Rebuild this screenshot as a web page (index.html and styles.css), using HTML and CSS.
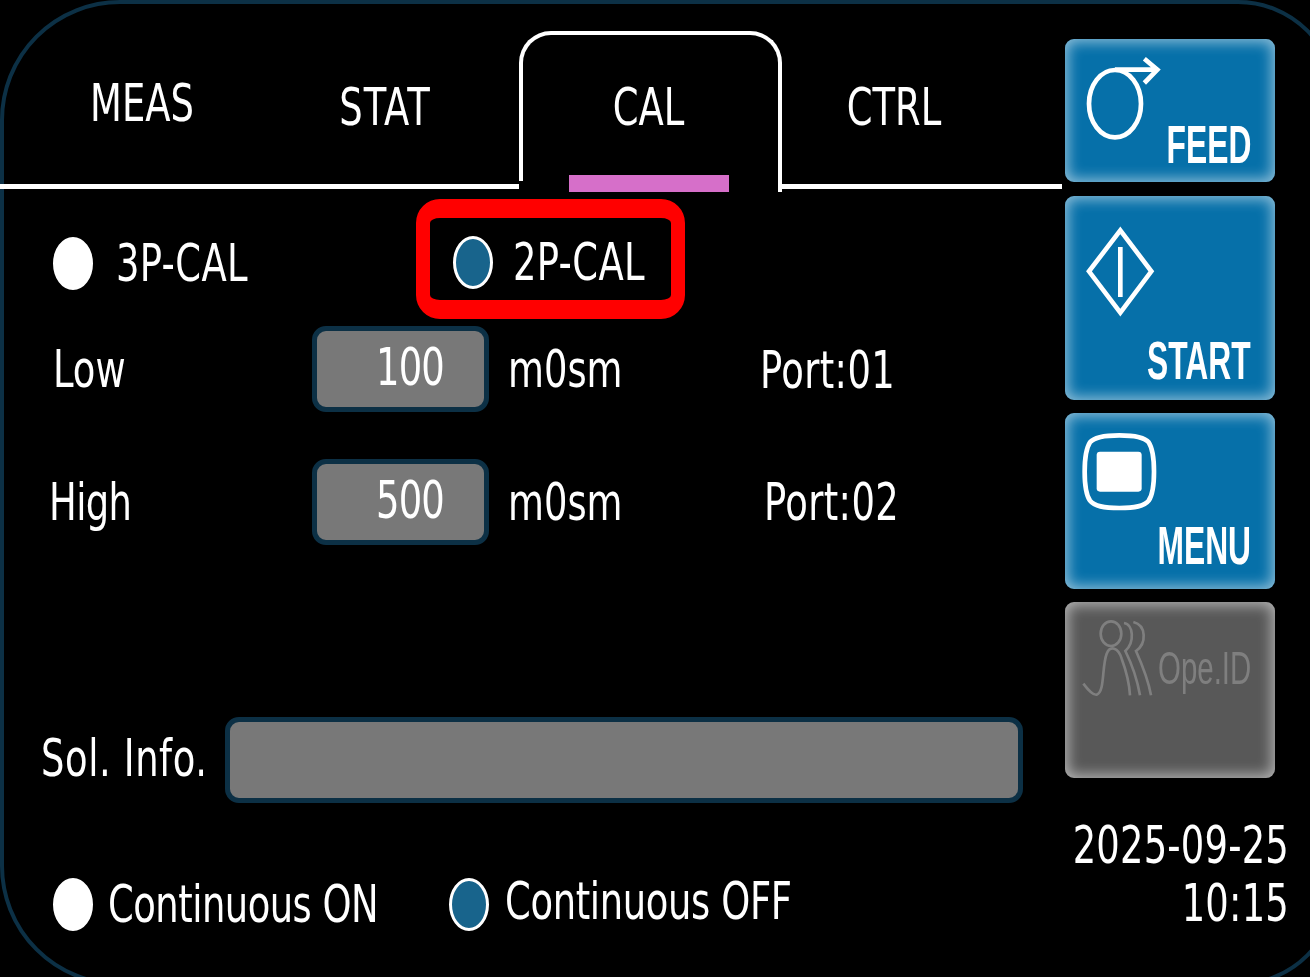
FILE: index.html
```html
<!DOCTYPE html>
<html lang="en">
<head>
  <meta charset="UTF-8" />
  <title>CAL</title>
  <link rel="stylesheet" href="styles.css">
</head>
<body>

  <div class="screen">
    <div class="main">

      <div class="tabs">
        <div class="tab tab-meas"><span class="txt">MEAS</span></div>
        <div class="tab tab-stat"><span class="txt">STAT</span></div>
        <div class="tab tab-cal">
          <span class="txt">CAL</span>
          <div class="tab-mark"></div>
        </div>
        <div class="tab tab-ctrl"><span class="txt">CTRL</span></div>
      </div>

      <div class="mode-row">
        <div class="mode mode-3p">
          <span class="radio"></span>
          <span class="txt">3P-CAL</span>
        </div>
        <div class="mode mode-2p">
          <span class="radio radio-on"></span>
          <span class="txt">2P-CAL</span>
        </div>
      </div>

      <div class="value-row row-low">
        <span class="txt label">Low</span>
        <div class="field"><span class="txt num">100</span></div>
        <span class="txt unit">m0sm</span>
        <span class="txt port">Port:01</span>
      </div>

      <div class="value-row row-high">
        <span class="txt label">High</span>
        <div class="field"><span class="txt num">500</span></div>
        <span class="txt unit">m0sm</span>
        <span class="txt port">Port:02</span>
      </div>

      <div class="sol-row">
        <span class="txt sol-label">Sol. Info.</span>
        <div class="field sol-field"></div>
      </div>

      <div class="cont-row">
        <span class="radio"></span>
        <span class="txt cont-on">Continuous ON</span>
        <span class="radio radio-on"></span>
        <span class="txt cont-off">Continuous OFF</span>
      </div>

    </div>

    <div class="side">
      <div class="btn btn-feed">
        <svg class="ico" width="90" height="90" viewBox="105 100 270 270">
          <ellipse cx="195" cy="252" rx="78" ry="101" />
          <path d="M195 150 H322 M283 117 L322 150 L283 190" />
        </svg>
        <span class="btn-label">FEED</span>
      </div>
      <div class="btn btn-start">
        <svg class="ico" width="80" height="100" viewBox="100 605 240 300">
          <path d="M212 630 L305 753 L212 877 L118 753 Z" />
          <path d="M212 680 V830" />
        </svg>
        <span class="btn-label">START</span>
      </div>
      <div class="btn btn-menu">
        <svg class="ico" width="80" height="84" viewBox="90 90 240 252">
          <path d="M208 106 C255 106 283 111 296 127 C309 147 312 180 312 215 C312 250 309 283 296 302 C283 319 255 324 208 324 C161 324 133 319 120 302 C107 283 104 250 104 215 C104 180 107 147 120 127 C133 111 161 106 208 106 Z" />
          <rect class="ico-fill" x="140" y="155" width="135" height="120" rx="10" />
        </svg>
        <span class="btn-label">MENU</span>
      </div>
      <div class="btn btn-ope">
        <svg class="ico ico-ope" width="75" height="82" viewBox="90 650 225 246">
          <ellipse cx="183" cy="700" rx="31" ry="37" />
          <path d="M100 850 C115 870 130 885 140 883 C165 875 155 800 170 760 C180 735 205 740 215 775 C228 810 238 850 240 885" />
          <path d="M222 668 C250 672 255 725 226 752 C245 790 262 840 270 885" />
          <path d="M250 665 C290 675 290 730 258 752 C275 790 295 840 303 885" />
        </svg>
        <span class="btn-label ope-label">Ope.ID</span>
      </div>
      <div class="clock">
        <div class="clock-line"><span class="txt">2025-09-25</span></div>
        <div class="clock-line"><span class="txt">10:15</span></div>
      </div>
    </div>
  </div>

</body>
</html>
```

FILE: styles.css
```css
* {
  box-sizing: border-box;
}

body {
  margin: 0;
  background-color: #000;
  overflow: hidden;
}

.screen {
  width: 1310px;
  height: 977px;
  display: flex;
  background-color: #000;
  color: #fff;
  font-family: "DejaVu Sans", sans-serif;
  font-stretch: condensed;
  font-size: 41px;
  line-height: 54px;
  position: relative;
  overflow: hidden;
}

.screen::before {
  content: "";
  position: absolute;
  left: 0;
  top: 0;
  width: 1330px;
  height: 978px;
  border: 4px solid #0c3045;
  border-radius: 120px 100px 100px 120px;
}

.main {
  width: 1062px;
  position: relative;
}

.txt {
  display: inline-block;
  transform: scaleY(1.25);
  white-space: nowrap;
}

/* tabs */
.tabs {
  height: 189px;
  display: flex;
  border-bottom: 5px solid #fff;
}

.tab {
  text-align: center;
  padding-top: 80px;
}

.tab-meas {
  width: 284px;
  padding-top: 76px;
}

.tab-stat {
  width: 202px;
  margin-right: 33px;
  letter-spacing: 1px;
}

.tab-cal {
  width: 263px;
  height: 161px;
  margin-top: 31px;
  padding: 45px 4px 0 0;
  background-color: #000;
  border: 4px solid #fff;
  border-bottom: none;
  border-radius: 32px 32px 0 0;
  position: relative;
}

.tab-cal::after {
  content: "";
  position: absolute;
  left: -4px;
  bottom: 0;
  width: 4px;
  height: 11px;
  background-color: #000;
}

.tab-mark {
  width: 160px;
  height: 17px;
  margin: 41px 0 0 46px;
  background-color: #d66fc9;
}

.tab-ctrl {
  width: 224px;
}

/* radios */
.radio {
  display: block;
  flex: none;
  width: 40px;
  height: 53px;
  border: 3px solid #fff;
  border-radius: 50%;
  background-color: #fff;
}

.radio-on {
  background-color: #18648c;
}

.mode-row {
  display: flex;
  height: 120px;
  margin-top: 10px;
  align-items: center;
}

.mode {
  display: flex;
  align-items: center;
}

.mode-3p {
  width: 416px;
  padding: 8px 0 0 53px;
  gap: 23px;
  letter-spacing: 0.4px;
}

.mode-2p {
  width: 269px;
  height: 120px;
  padding: 6px 0 0 23px;
  gap: 20px;
  border: solid #f00;
  border-width: 19px 14px;
  border-radius: 24px;
  letter-spacing: 0.4px;
}

/* value rows */
.value-row {
  display: grid;
  grid-template-columns: 312px 177px 271px auto;
  height: 86px;
  align-items: center;
  margin-top: 7px;
}

.row-high {
  margin-top: 47px;
}

.label {
  padding-left: 53px;
}

.row-high .label {
  padding-left: 49px;
  letter-spacing: -0.6px;
}

.unit {
  padding-left: 19px;
}

.port {
  letter-spacing: 0.4px;
  padding-top: 2px;
}

.row-high .port {
  padding: 0 0 0 4px;
}

.field {
  height: 86px;
  background-color: #787878;
  border: 5px solid #0c3045;
  border-radius: 14px;
  text-align: right;
  padding: 9px 40px 0 0;
}

.num {
  letter-spacing: -0.8px;
}

/* solution info */
.sol-row {
  display: flex;
  height: 86px;
  align-items: center;
  margin-top: 172px;
  padding-left: 41px;
}

.sol-label {
  width: 184px;
  margin-bottom: 4px;
  letter-spacing: 0.6px;
}

.sol-field {
  width: 798px;
}

/* continuous */
.cont-row {
  display: flex;
  height: 54px;
  align-items: center;
  margin-top: 74px;
  padding-left: 53px;
  letter-spacing: -0.5px;
}

.cont-on {
  width: 356px;
  padding-left: 15px;
}

.cont-off {
  padding-left: 16px;
  margin-bottom: 6px;
  letter-spacing: -0.35px;
}

/* side buttons */
.side {
  width: 248px;
  padding: 39px 21px 0 3px;
}

.btn {
  width: 210px;
  margin-bottom: 13px;
  background-color: #0670a9;
  border-radius: 9px;
  box-shadow: inset 0 0 14px 3px rgba(255, 255, 255, 0.55);
  display: flex;
  flex-direction: column;
}

.btn-feed {
  height: 143px;
  margin-bottom: 14px;
  padding: 14px 24px 0 20px;
}

.btn-feed .btn-label {
  margin-top: -17px;
}

.btn-start {
  height: 204px;
  padding: 26px 24px 0 18px;
}

.btn-start .btn-label {
  margin-top: 20px;
}

.btn-menu {
  height: 176px;
  padding: 17px 24px 0 15px;
}

.btn-menu .btn-label {
  margin-top: 13px;
}

.btn-ope {
  height: 176px;
  background-color: #585858;
  flex-direction: row;
  padding: 15px 0 0 15px;
}

.ico {
  display: block;
  flex: none;
  fill: none;
  stroke: #fff;
  stroke-width: 14;
  filter: blur(0.7px);
}

.ico-fill {
  fill: #fff;
  stroke: none;
}

.ico-ope {
  stroke: #7f7f7f;
  stroke-width: 8;
}

.btn-label {
  display: block;
  align-self: flex-end;
  font-family: "Liberation Sans", sans-serif;
  font-stretch: normal;
  font-weight: bold;
  font-size: 53px;
  line-height: 38px;
  transform: scaleX(0.6);
  transform-origin: right center;
  white-space: nowrap;
  filter: blur(0.6px);
}

.btn-ope .ope-label {
  align-self: flex-start;
  margin: 32px 0 0 3px;
  color: #7f7f7f;
  font-weight: normal;
  font-size: 46px;
  transform: scaleX(0.64);
  transform-origin: left center;
}

/* date and time */
.clock {
  margin-top: 38px;
  text-align: right;
}

.clock-line {
  height: 58px;
  line-height: 58px;
  letter-spacing: 0.2px;
}
```
